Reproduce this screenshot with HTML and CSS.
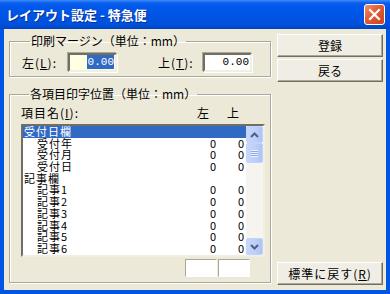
FILE: index.html
```html
<!DOCTYPE html>
<html>
<head>
<meta charset="utf-8">
<title>レイアウト設定 - 特急便</title>
<link rel="stylesheet" href="styles.css">
</head>
<body>
<div class="window">
    <div class="titlebar">
        <span class="title">レイアウト設定 - 特急便</span>
        <span class="close">
            <svg width="13" height="13" viewBox="0 0 13 13"><path d="M2 2 L11 11 M11 2 L2 11" stroke="#fff" stroke-width="2.2" stroke-linecap="square"/></svg>
        </span>
    </div>
    <div class="client">
        <div class="main">
            <fieldset class="group margins">
                <legend>印刷マージン（単位：mm）</legend>
                <div class="margin-row">
                    <span class="lbl">左(<u>L</u>):</span>
                    <span class="edit active"><span class="sel">0.00</span></span>
                    <span class="lbl lbl-top">上(<u>T</u>):</span>
                    <span class="edit">0.00</span>
                </div>
            </fieldset>
            <fieldset class="group items">
                <legend>各項目印字位置（単位：mm）</legend>
                <div class="list-head">
                    <span class="name-h">項目名(<u>I</u>):</span>
                    <span class="col">左</span>
                    <span class="col">上</span>
                </div>
                <div class="listbox">
                    <ul class="rows">
                        <li class="row selected"><span class="name">受付日欄</span></li>
                        <li class="row"><span class="name sub">受付年</span><span class="num">0</span><span class="num">0</span></li>
                        <li class="row"><span class="name sub">受付月</span><span class="num">0</span><span class="num">0</span></li>
                        <li class="row"><span class="name sub">受付日</span><span class="num">0</span><span class="num">0</span></li>
                        <li class="row"><span class="name">記事欄</span></li>
                        <li class="row"><span class="name sub">記事1</span><span class="num">0</span><span class="num">0</span></li>
                        <li class="row"><span class="name sub">記事2</span><span class="num">0</span><span class="num">0</span></li>
                        <li class="row"><span class="name sub">記事3</span><span class="num">0</span><span class="num">0</span></li>
                        <li class="row"><span class="name sub">記事4</span><span class="num">0</span><span class="num">0</span></li>
                        <li class="row"><span class="name sub">記事5</span><span class="num">0</span><span class="num">0</span></li>
                        <li class="row"><span class="name sub">記事6</span><span class="num">0</span><span class="num">0</span></li>
                    </ul>
                    <div class="vscroll">
                        <span class="sbtn">
                            <svg width="9" height="6" viewBox="0 0 9 6"><path d="M1 5 L4.5 1.5 L8 5" fill="none" stroke="#4D6185" stroke-width="2"/></svg>
                        </span>
                        <span class="thumb"><span class="grip"></span></span>
                        <span class="track"></span>
                        <span class="sbtn">
                            <svg width="9" height="6" viewBox="0 0 9 6"><path d="M1 1 L4.5 4.5 L8 1" fill="none" stroke="#4D6185" stroke-width="2"/></svg>
                        </span>
                    </div>
                </div>
                <div class="cells">
                    <span class="cell"></span>
                    <span class="cell"></span>
                </div>
            </fieldset>
        </div>
        <div class="buttons">
            <button class="btn">登録</button>
            <button class="btn">戻る</button>
            <button class="btn reset">標準に戻す(<u>R</u>)</button>
        </div>
    </div>
</div>
</body>
</html>
```

FILE: styles.css
```css
body {
    margin: 0;
    font-family: "Noto Sans CJK JP", "DejaVu Sans", sans-serif;
    font-size: 12px;
    color: black;
}
.window {
    width: 390px;
    height: 294px;
    display: flex;
    flex-direction: column;
}
.titlebar {
    height: 29px;
    display: flex;
    align-items: center;
    justify-content: space-between;
    padding: 0 5px 0 6px;
    background: linear-gradient(#3D8BF6 0px, #0A5EEE 3px, #0058EB 7px, #0054E3 16px, #0051DC 24px, #0046C4 29px);
}
.title {
    color: white;
    font-weight: bold;
    font-size: 13px;
    text-shadow: 1px 1px #0A2F9A;
}
.close {
    width: 19px;
    height: 19px;
    display: flex;
    align-items: center;
    justify-content: center;
    border: 1px solid white;
    border-radius: 3px;
    background-color: #E0552F;
    background-image: linear-gradient(135deg, #F08F70, #E25A33 45%, #CC4420);
}
.client {
    flex: 1;
    display: flex;
    gap: 6px;
    background: #ECE9D8;
    border: 4px solid #0055E5;
    border-top: 0;
    padding: 5px 3px 5px 5px;
}
.main {
    width: 262px;
}
.group {
    margin: 0;
    border: 1px solid #ACA899;
    box-shadow: inset 1px 1px white, 1px 1px white;
    min-width: 0;
}
.group legend {
    padding: 0 1px;
    margin-left: 8px;
    line-height: 14px;
}
.margins {
    padding: 5px 0 4px 12px;
}
.margin-row {
    display: flex;
    align-items: center;
    height: 19px;
}
.lbl {
    width: 46px;
    letter-spacing: 1px;
}
.lbl-top {
    margin-left: 41px;
    width: 45px;
}
.edit {
    box-sizing: border-box;
    width: 49px;
    height: 19px;
    border: 2px solid;
    border-color: #716F64 #F1EFE2 #F1EFE2 #716F64;
    box-shadow: -1px -1px #ACA899, 1px 1px white;
    background: white;
    font-family: "Liberation Mono", monospace;
    font-size: 11px;
    line-height: 15px;
    text-align: right;
    padding-right: 1px;
}
.edit.active {
    background: #FFFFE1;
}
.sel {
    background: #316AC5;
    color: white;
    padding: 1px 0 1px 1px;
}
.items {
    margin-top: 10px;
    padding: 5px 6px 5px 11px;
}
.list-head {
    display: flex;
    gap: 18px;
    padding-right: 25px;
    line-height: 14px;
    height: 14px;
}
.name-h {
    flex: 1;
    letter-spacing: 1px;
}
.col {
    width: 12px;
}
.listbox {
    display: flex;
    box-sizing: border-box;
    width: 244px;
    height: 133px;
    margin-top: 4px;
    border: 2px solid;
    border-color: #716F64 #F1EFE2 #F1EFE2 #716F64;
    background: white;
}
.rows {
    flex: 1;
    list-style: none;
    margin: 0;
    padding: 0;
    overflow: hidden;
    font-size: 11px;
}
.row {
    display: flex;
    height: 11.7px;
    line-height: 11.7px;
    padding-right: 2px;
}
.row.selected {
    background: #316AC5;
    color: white;
}
.name {
    flex: 1;
    padding-left: 1px;
    letter-spacing: 1px;
}
.name.sub {
    padding-left: 14px;
}
.num {
    width: 28px;
    text-align: right;
}
.vscroll {
    width: 17px;
    display: flex;
    flex-direction: column;
    background: #F5F4EE;
}
.sbtn, .thumb {
    box-sizing: border-box;
    height: 17px;
    display: flex;
    align-items: center;
    justify-content: center;
    border: 1px solid #C3D3FD;
    border-radius: 2px;
    background: linear-gradient(90deg, #C7D7FC, #BBCDF9 60%, #AFC3F3);
}
.thumb {
    height: 20px;
}
.grip {
    width: 7px;
    height: 7px;
    background: repeating-linear-gradient(#EEF4FE 0 1px, #8CA6DE 1px 2px);
}
.track {
    flex: 1;
}
.cells {
    display: flex;
    gap: 1px;
    margin: 2px 0 0 164px;
}
.cell {
    width: 32px;
    height: 18px;
    box-sizing: border-box;
    border: 1px solid;
    border-color: #ACA899 white white #ACA899;
    background: white;
}
.buttons {
    width: 106px;
    display: flex;
    flex-direction: column;
    gap: 2px;
}
.btn {
    height: 23px;
    padding: 0;
    font: inherit;
    line-height: 17px;
    color: black;
    background: #F0EEE4;
    border: 1px solid;
    border-color: white #716F64 #716F64 white;
    box-shadow: inset -1px -1px #ACA899;
}
.reset {
    margin-top: auto;
    letter-spacing: 1px;
}
```
